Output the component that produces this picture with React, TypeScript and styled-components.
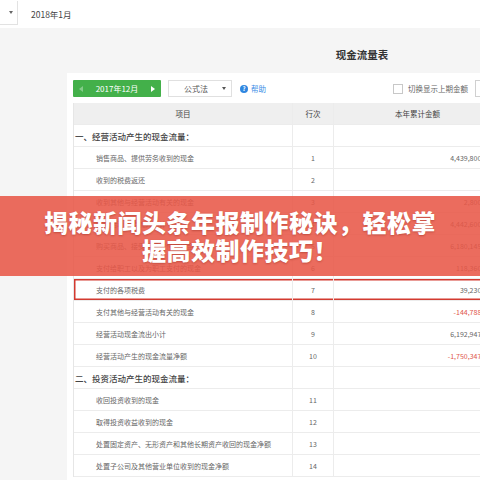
import React from 'react';
import styled, { createGlobalStyle } from 'styled-components';

const GlobalStyle = createGlobalStyle`
    html, body {
        margin: 0;
        padding: 0;
        background: #f5f5f5;
        overflow: hidden;
        font-family: "Noto Sans CJK SC", "Noto Sans", sans-serif;
        color: #555;
    }
`;

const Page = styled.div`
    position: relative;
    width: 480px;
    height: 480px;
    overflow: hidden;
`;

const TopBar = styled.div`
    height: 28px;
    background: #fff;
    display: flex;
    align-items: center;
    gap: 13px;
`;

const PeriodSelect = styled.div`
    width: 18px;
    height: 24px;
    margin-top: -3px;
    border: 1px solid #e2e2e2;
    border-left: none;
    border-top: none;
    box-sizing: border-box;
    display: flex;
    align-items: center;
    justify-content: flex-end;
    padding-right: 4px;
`;

const Caret = styled.span<{ color?: string }>`
    width: 0;
    height: 0;
    border-left: 2.5px solid transparent;
    border-right: 2.5px solid transparent;
    border-top: 3px solid ${p => p.color || '#666'};
`;

const PeriodText = styled.span`
    font-size: 8.5px;
    color: #444;
`;

const Content = styled.div`
    padding-left: 67px;
    width: 590px;
`;

const Title = styled.h1`
    margin: 0;
    height: 45px;
    line-height: 54px;
    text-align: center;
    font-size: 10.5px;
    font-weight: 700;
    color: #333;
`;

const Panel = styled.div`
    background: #fff;
    padding: 7px 6px 0;
    height: 420px;
`;

const Toolbar = styled.div`
    width: 428px;
    height: 17px;
    display: flex;
    align-items: center;
    justify-content: space-between;
`;

const Group = styled.div`
    display: flex;
    align-items: center;
    gap: 7px;
`;

const MonthButton = styled.div`
    width: 88px;
    height: 17px;
    background: #43b04a;
    color: #fff;
    font-size: 8px;
    display: flex;
    align-items: center;
    justify-content: space-between;
    padding: 0 6px;
    box-sizing: border-box;
    border-radius: 1px;
`;

const Arrow = styled.span<{ dir: 'left' | 'right'; faded?: boolean }>`
    width: 0;
    height: 0;
    border-top: 3px solid transparent;
    border-bottom: 3px solid transparent;
    ${p => p.dir === 'left' ? 'border-right' : 'border-left'}: 4px solid ${p => p.faded ? 'rgba(255,255,255,0.35)' : '#fff'};
`;

const MethodSelect = styled.div`
    width: 64px;
    height: 17px;
    border: 1px solid #e0e0e0;
    box-sizing: border-box;
    font-size: 8px;
    color: #555;
    display: flex;
    align-items: center;
    justify-content: space-between;
    padding: 0 5px 0 15px;
`;

const Help = styled.span`
    display: flex;
    align-items: center;
    gap: 3px;
    font-size: 7.5px;
    color: #3a8ee6;
    margin-left: 1px;
`;

const HelpDot = styled.span`
    width: 8px;
    height: 8px;
    border-radius: 50%;
    background: #2f86e0;
    color: #fff;
    font-size: 6px;
    font-weight: 700;
    display: flex;
    align-items: center;
    justify-content: center;
`;

const CheckLabel = styled.label`
    display: flex;
    align-items: center;
    gap: 5px;
    font-size: 7.5px;
    color: #666;
`;

const CheckBox = styled.span`
    width: 8px;
    height: 8px;
    border: 1px solid #c8c8c8;
    background: #fff;
`;

const SmallInput = styled.span`
    width: 26px;
    height: 17px;
    border: 1px solid #d0d0d0;
    box-sizing: border-box;
`;

const Table = styled.div`
    margin-top: 6px;
    width: 428px;
    border-left: 1px solid #e6e6e6;
`;

const Row = styled.div<{ head?: boolean; mark?: boolean }>`
    display: grid;
    grid-template-columns: 219px 41px 1fr;
    height: 22px;
    box-sizing: border-box;
    border-bottom: 1px solid #ececec;
    background: ${p => p.head ? '#efefef' : '#fff'};
    box-shadow: ${p => p.mark ? 'inset 0 0 0 1.5px #d33a30' : 'none'};
    font-size: ${p => p.head ? '7.5px' : '7px'};
    color: ${p => p.head ? '#444' : '#666'};
`;

const Cell = styled.div<{ align?: 'left' | 'center' | 'right'; indent?: number; red?: boolean; section?: boolean }>`
    display: flex;
    align-items: center;
    justify-content: ${p => p.align === 'right' ? 'flex-end' : p.align === 'center' ? 'center' : 'flex-start'};
    padding: 0 ${p => p.align === 'right' ? 10 : 0}px 0 ${p => p.indent ?? 0}px;
    border-right: 1px solid #ececec;
    white-space: nowrap;
    color: ${p => p.red ? '#e0564b' : p.section ? '#444' : 'inherit'};
    font-size: ${p => p.section ? '8.5px' : 'inherit'};
    font-weight: ${p => p.section ? 500 : 'inherit'};
`;

const Banner = styled.div`
    position: absolute;
    left: 0;
    right: 0;
    top: 196px;
    height: 80px;
    background: rgba(232, 88, 72, 0.88);
    display: flex;
    align-items: center;
    justify-content: center;
`;

const BannerText = styled.div`
    color: #fff;
    font-family: "Noto Sans CJK SC", sans-serif;
    font-weight: 900;
    font-size: 24px;
    line-height: 28px;
    letter-spacing: 0.5px;
    text-align: center;
    width: 410px;
    text-shadow: 0 1px 2px rgba(120, 20, 10, 0.35);
`;

type Item = { name: string; no?: string; amount?: string; section?: boolean; mark?: boolean };

const rows: Item[] = [
    { name: '一、经营活动产生的现金流量：', section: true },
    { name: '销售商品、提供劳务收到的现金', no: '1', amount: '4,439,800.00' },
    { name: '收到的税费返还', no: '2' },
    { name: '收到其他与经营活动有关的现金', no: '3', amount: '2,800.00' },
    { name: '经营活动现金流入小计', no: '4', amount: '4,442,600.00' },
    { name: '购买商品、接受劳务支付的现金', no: '5', amount: '6,180,145.00' },
    { name: '支付给职工以及为职工支付的现金', no: '6', amount: '118,360.00' },
    { name: '支付的各项税费', no: '7', amount: '39,230.00', mark: true },
    { name: '支付其他与经营活动有关的现金', no: '8', amount: '-144,788.00' },
    { name: '经营活动现金流出小计', no: '9', amount: '6,192,947.00' },
    { name: '经营活动产生的现金流量净额', no: '10', amount: '-1,750,347.00' },
    { name: '二、投资活动产生的现金流量：', section: true },
    { name: '收回投资收到的现金', no: '11' },
    { name: '取得投资收益收到的现金', no: '12' },
    { name: '处置固定资产、无形资产和其他长期资产收回的现金净额', no: '13' },
    { name: '处置子公司及其他营业单位收到的现金净额', no: '14' },
];

const App = () => {
    return (
        <Page>
            <GlobalStyle />
            <TopBar>
                <PeriodSelect><Caret /></PeriodSelect>
                <PeriodText>2018年1月</PeriodText>
            </TopBar>
            <Content>
                <Title>现金流量表</Title>
                <Panel>
                    <Toolbar>
                        <Group>
                            <MonthButton>
                                <Arrow dir="left" faded />
                                <span>2017年12月</span>
                                <Arrow dir="right" />
                            </MonthButton>
                            <MethodSelect>
                                <span>公式法</span>
                                <Caret color="#555" />
                            </MethodSelect>
                            <Help><HelpDot>?</HelpDot>帮助</Help>
                        </Group>
                        <Group>
                            <CheckLabel><CheckBox />切换显示上期金额</CheckLabel>
                            <SmallInput />
                        </Group>
                    </Toolbar>
                    <Table>
                        <Row head>
                            <Cell align="center">项目</Cell>
                            <Cell align="center">行次</Cell>
                            <Cell align="center">本年累计金额</Cell>
                        </Row>
                        {rows.map((r, i) => (
                            <Row key={i} mark={r.mark}>
                                <Cell section={r.section} indent={r.section ? 1 : 22}>{r.name}</Cell>
                                <Cell align="center">{r.no}</Cell>
                                <Cell align="right" red={r.amount?.startsWith('-')}>{r.amount}</Cell>
                            </Row>
                        ))}
                    </Table>
                </Panel>
            </Content>
            <Banner>
                <BannerText>揭秘新闻头条年报制作秘诀，轻松掌握高效制作技巧！</BannerText>
            </Banner>
        </Page>
    );
};

export default App;
